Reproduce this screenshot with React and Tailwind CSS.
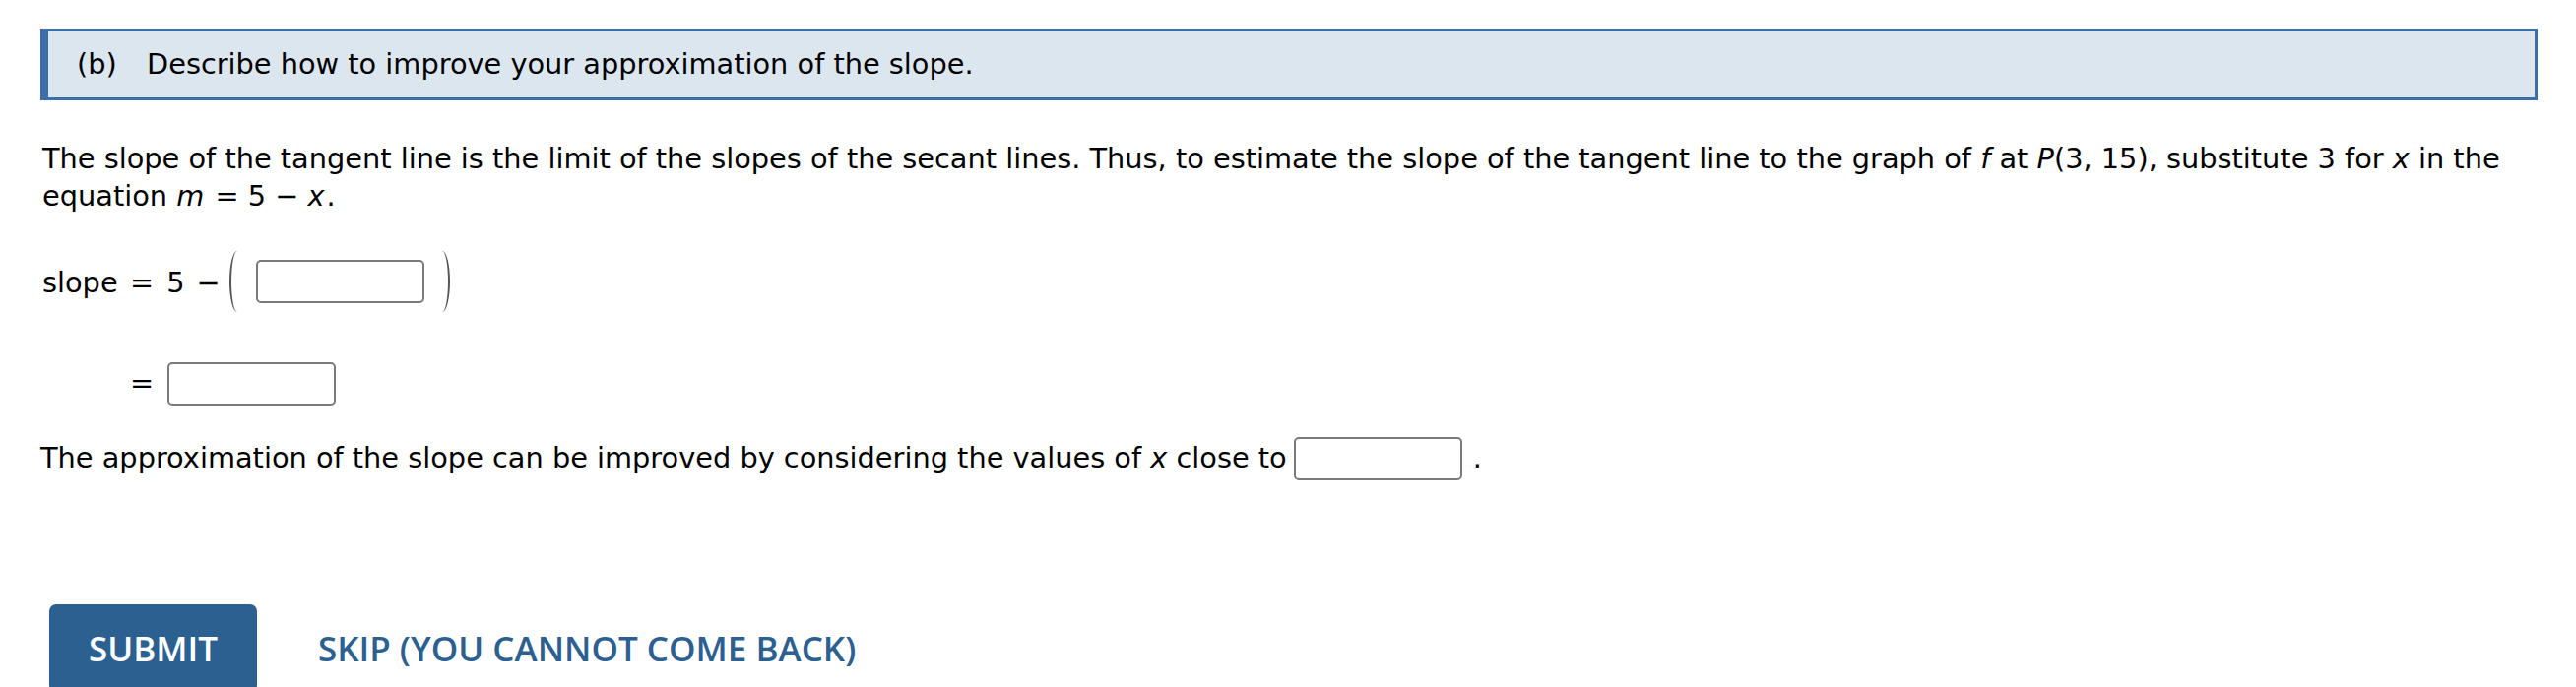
import React from 'react'

function AnswerBox({ className = '' }) {
  return (
    <span
      className={`inline-block h-[44px] w-[171px] shrink-0 rounded-[5px] border-2 border-[#7a7a7a] bg-white ${className}`}
    />
  )
}

export default function App() {
  return (
    <div className="min-h-screen bg-white pt-[29px] pl-[41px] pr-[39px] text-black font-['DejaVu_Sans',Verdana,sans-serif] text-[28.8px]">
      {/* part header */}
      <div className="flex h-[73px] items-center border-[3px] border-l-[8px] border-[#3e6ea8] bg-[#dce6ef] pl-[29px]">
        <span className="inline-block w-[71px]">(b)</span>
        <span>Describe how to improve your approximation of the slope.</span>
      </div>

      <div className="mt-[40px] pl-[2px] leading-[38.4px]">
        <div>
          The slope of the tangent line is the limit of the slopes of the secant lines. Thus, to estimate the
          slope of the tangent line to the graph of <i>f</i> at <i>P</i>(3, 15), substitute 3 for <i>x</i> in the
        </div>
        <div>
          equation <i className="pr-[2px]">m</i> = 5 − <i className="pr-[2px]">x</i>.
        </div>
      </div>

      <div className="mt-[35px] flex h-[64px] items-center pl-[2px]">
        <span className="inline-block w-[89px] pt-[4px]">slope</span>
        <span className="pt-[4px]">=</span>
        <span className="ml-[13px] pt-[4px]">5</span>
        <span className="ml-[12px] pt-[4px]">−</span>
        <span className="ml-[9px] inline-block h-[62px] w-[16px] rounded-[50%] border-l-[2px] border-[#555]" />
        <AnswerBox className="ml-[11px]" />
        <span className="ml-[10px] inline-block h-[62px] w-[16px] rounded-[50%] border-r-[2px] border-[#555]" />
      </div>

      <div className="mt-[50px] flex items-center pl-[91px]">
        <span className="inline-block w-[38px]">=</span>
        <AnswerBox />
      </div>

      <div className="mt-[32px] flex items-center">
        <span>
          The approximation of the slope can be improved by considering the values of <i>x</i> close to
        </span>
        <AnswerBox className="ml-[7px]" />
        <span className="ml-[11px]">.</span>
      </div>

      <div className="mt-[126px] flex items-center font-['Open_Sans',sans-serif] font-semibold text-[35px]">
        <button className="ml-[9px] h-[90px] w-[211px] rounded-[7px] bg-[#2b6091] text-white">SUBMIT</button>
        <button className="ml-[62px] text-[#2b6091]">SKIP (YOU CANNOT COME BACK)</button>
      </div>
    </div>
  )
}
